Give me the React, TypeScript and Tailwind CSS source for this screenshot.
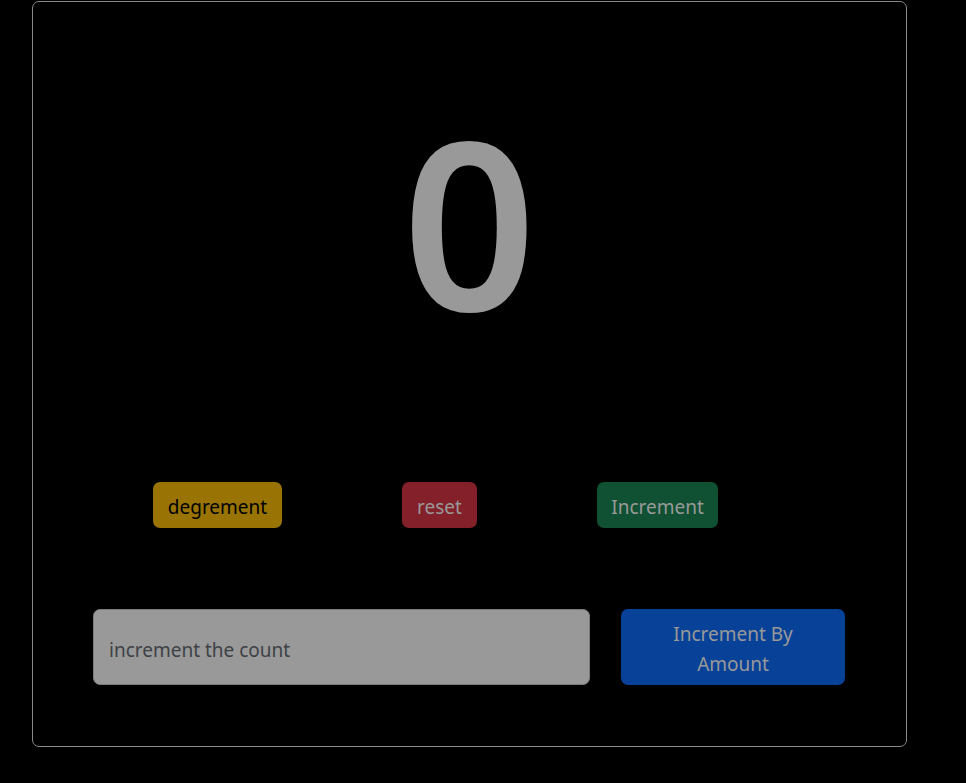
import React from "react";

export default function App() {
  return (
    <div className="min-h-[783px] w-full bg-black pt-[1px] pl-[32px]" style={{ fontFamily: '"Noto Sans", "Open Sans", sans-serif' }}>
      <div className="w-[875px] h-[746px] rounded-[7px] border border-[#8a8a8a] flex flex-col">
        <div className="mt-[102px] h-[234px] text-center text-[234px] font-semibold leading-none text-[#999999]">0</div>
        <div className="mt-[144px] flex flex-row pl-[120px] gap-[120px]">
          <button className="w-[129px] h-[46px] pt-[4px] rounded-[7px] bg-[#997404] text-[#000000] text-[19px] flex items-center justify-center">degrement</button>
          <button className="w-[75px] h-[46px] pt-[4px] rounded-[7px] bg-[#842029] text-[#999999] text-[19px] flex items-center justify-center">reset</button>
          <button className="w-[121px] h-[46px] pt-[4px] rounded-[7px] bg-[#0f5132] text-[#999999] text-[19px] flex items-center justify-center">Increment</button>
        </div>
        <div className="mt-[81px] flex flex-row px-[60px] gap-[31px]">
          <input
            className="w-[497px] h-[76px] rounded-[7px] border border-[#7a7a7a] bg-[#999999] pl-[15px] pt-[5px] text-[19px] text-[#3d4146] placeholder:text-[#3d4146] outline-none"
            placeholder="increment the count"
          />
          <button className="w-[224px] h-[76px] pt-[4px] rounded-[7px] bg-[#084298] text-[#999999] text-[19px] leading-[30px] flex flex-col items-center justify-center">
            <span>Increment By</span>
            <span>Amount</span>
          </button>
        </div>
      </div>
    </div>
  );
}
